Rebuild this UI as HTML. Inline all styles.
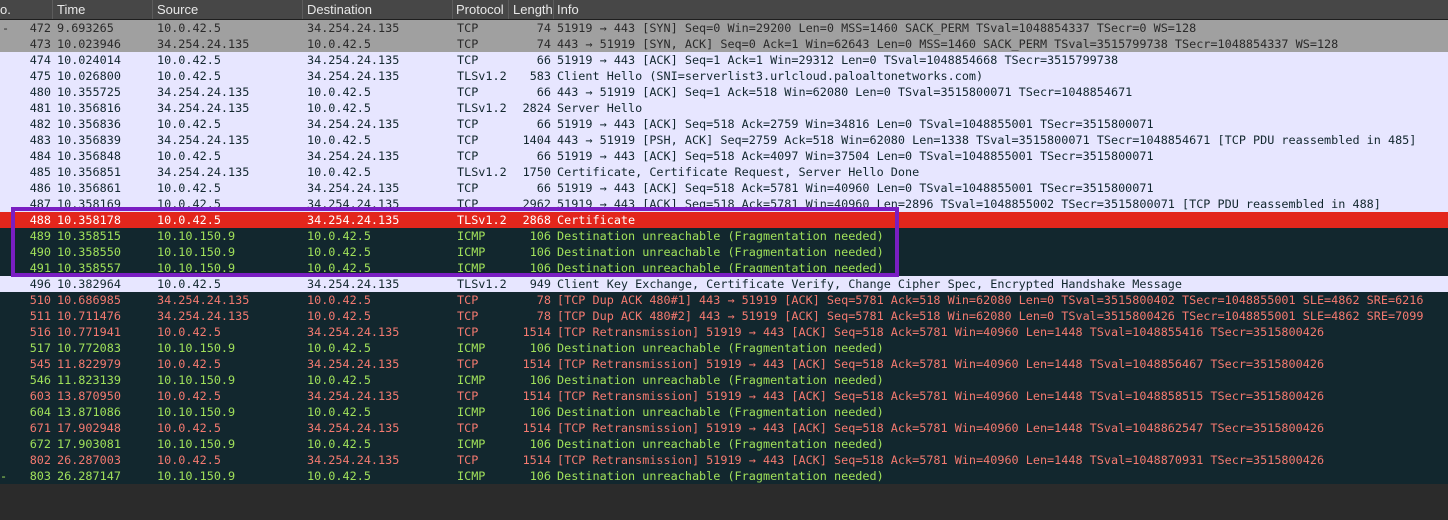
<!DOCTYPE html>
<html><head><meta charset="utf-8"><style>
body{margin:0;width:1448px;height:520px;background:#2b2b2b;overflow:hidden;position:relative}
.hdr{position:absolute;left:0;top:0;width:1448px;height:19px;background:#474747;border-bottom:1px solid #1e1e1e;font:13px "Liberation Sans",sans-serif;color:#e8e8e8}
.hdr span{position:absolute;top:2px}
.hdr i{position:absolute;top:0;width:1px;height:19px;background:#5c5c5c}
.r{position:absolute;left:0;width:1448px;height:16px;font:11.8px "DejaVu Sans Mono","Liberation Mono",monospace;white-space:pre;line-height:16px}
.r span{position:absolute;top:0}
.n{right:1397px;text-align:right}
.t{left:57px}.s{left:157px}.d{left:307px}.p{left:457px}.l{right:897px;text-align:right}.i{left:557px}
.g{background:#a0a0a0;color:#2a2a2a}
.w{background:#e7e6ff;color:#12272e}
.k{background:#12272e;color:#a0e05a}
.x{background:#12272e;color:#f47a70}
.red{background:#e3261c;color:#fff}
.box{position:absolute;left:11px;top:207px;width:880px;height:62px;border:4px solid #7a1ec2}
</style></head><body>
<div class="hdr"><span style="left:0">o.</span><i style="left:52px"></i><span style="left:57px">Time</span><i style="left:152px"></i><span style="left:157px">Source</span><i style="left:302px"></i><span style="left:307px">Destination</span><i style="left:452px"></i><span style="left:456px">Protocol</span><i style="left:508px"></i><span style="left:513px">Length</span><i style="left:553px"></i><span style="left:557px">Info</span></div>

<div class="r g" style="top:20px"><span style="left:2px">-</span><span class="n">472</span><span class="t">9.693265</span><span class="s">10.0.42.5</span><span class="d">34.254.24.135</span><span class="p">TCP</span><span class="l">74</span><span class="i">51919 → 443 [SYN] Seq=0 Win=29200 Len=0 MSS=1460 SACK_PERM TSval=1048854337 TSecr=0 WS=128</span></div>
<div class="r g" style="top:36px"><span class="n">473</span><span class="t">10.023946</span><span class="s">34.254.24.135</span><span class="d">10.0.42.5</span><span class="p">TCP</span><span class="l">74</span><span class="i">443 → 51919 [SYN, ACK] Seq=0 Ack=1 Win=62643 Len=0 MSS=1460 SACK_PERM TSval=3515799738 TSecr=1048854337 WS=128</span></div>
<div class="r w" style="top:52px"><span class="n">474</span><span class="t">10.024014</span><span class="s">10.0.42.5</span><span class="d">34.254.24.135</span><span class="p">TCP</span><span class="l">66</span><span class="i">51919 → 443 [ACK] Seq=1 Ack=1 Win=29312 Len=0 TSval=1048854668 TSecr=3515799738</span></div>
<div class="r w" style="top:68px"><span class="n">475</span><span class="t">10.026800</span><span class="s">10.0.42.5</span><span class="d">34.254.24.135</span><span class="p">TLSv1.2</span><span class="l">583</span><span class="i">Client Hello (SNI=serverlist3.urlcloud.paloaltonetworks.com)</span></div>
<div class="r w" style="top:84px"><span class="n">480</span><span class="t">10.355725</span><span class="s">34.254.24.135</span><span class="d">10.0.42.5</span><span class="p">TCP</span><span class="l">66</span><span class="i">443 → 51919 [ACK] Seq=1 Ack=518 Win=62080 Len=0 TSval=3515800071 TSecr=1048854671</span></div>
<div class="r w" style="top:100px"><span class="n">481</span><span class="t">10.356816</span><span class="s">34.254.24.135</span><span class="d">10.0.42.5</span><span class="p">TLSv1.2</span><span class="l">2824</span><span class="i">Server Hello</span></div>
<div class="r w" style="top:116px"><span class="n">482</span><span class="t">10.356836</span><span class="s">10.0.42.5</span><span class="d">34.254.24.135</span><span class="p">TCP</span><span class="l">66</span><span class="i">51919 → 443 [ACK] Seq=518 Ack=2759 Win=34816 Len=0 TSval=1048855001 TSecr=3515800071</span></div>
<div class="r w" style="top:132px"><span class="n">483</span><span class="t">10.356839</span><span class="s">34.254.24.135</span><span class="d">10.0.42.5</span><span class="p">TCP</span><span class="l">1404</span><span class="i">443 → 51919 [PSH, ACK] Seq=2759 Ack=518 Win=62080 Len=1338 TSval=3515800071 TSecr=1048854671 [TCP PDU reassembled in 485]</span></div>
<div class="r w" style="top:148px"><span class="n">484</span><span class="t">10.356848</span><span class="s">10.0.42.5</span><span class="d">34.254.24.135</span><span class="p">TCP</span><span class="l">66</span><span class="i">51919 → 443 [ACK] Seq=518 Ack=4097 Win=37504 Len=0 TSval=1048855001 TSecr=3515800071</span></div>
<div class="r w" style="top:164px"><span class="n">485</span><span class="t">10.356851</span><span class="s">34.254.24.135</span><span class="d">10.0.42.5</span><span class="p">TLSv1.2</span><span class="l">1750</span><span class="i">Certificate, Certificate Request, Server Hello Done</span></div>
<div class="r w" style="top:180px"><span class="n">486</span><span class="t">10.356861</span><span class="s">10.0.42.5</span><span class="d">34.254.24.135</span><span class="p">TCP</span><span class="l">66</span><span class="i">51919 → 443 [ACK] Seq=518 Ack=5781 Win=40960 Len=0 TSval=1048855001 TSecr=3515800071</span></div>
<div class="r w" style="top:196px"><span class="n">487</span><span class="t">10.358169</span><span class="s">10.0.42.5</span><span class="d">34.254.24.135</span><span class="p">TCP</span><span class="l">2962</span><span class="i">51919 → 443 [ACK] Seq=518 Ack=5781 Win=40960 Len=2896 TSval=1048855002 TSecr=3515800071 [TCP PDU reassembled in 488]</span></div>
<div class="r red" style="top:212px"><span class="n">488</span><span class="t">10.358178</span><span class="s">10.0.42.5</span><span class="d">34.254.24.135</span><span class="p">TLSv1.2</span><span class="l">2868</span><span class="i">Certificate</span></div>
<div class="r k" style="top:228px"><span class="n">489</span><span class="t">10.358515</span><span class="s">10.10.150.9</span><span class="d">10.0.42.5</span><span class="p">ICMP</span><span class="l">106</span><span class="i">Destination unreachable (Fragmentation needed)</span></div>
<div class="r k" style="top:244px"><span class="n">490</span><span class="t">10.358550</span><span class="s">10.10.150.9</span><span class="d">10.0.42.5</span><span class="p">ICMP</span><span class="l">106</span><span class="i">Destination unreachable (Fragmentation needed)</span></div>
<div class="r k" style="top:260px"><span class="n">491</span><span class="t">10.358557</span><span class="s">10.10.150.9</span><span class="d">10.0.42.5</span><span class="p">ICMP</span><span class="l">106</span><span class="i">Destination unreachable (Fragmentation needed)</span></div>
<div class="r w" style="top:276px"><span class="n">496</span><span class="t">10.382964</span><span class="s">10.0.42.5</span><span class="d">34.254.24.135</span><span class="p">TLSv1.2</span><span class="l">949</span><span class="i">Client Key Exchange, Certificate Verify, Change Cipher Spec, Encrypted Handshake Message</span></div>
<div class="r x" style="top:292px"><span class="n">510</span><span class="t">10.686985</span><span class="s">34.254.24.135</span><span class="d">10.0.42.5</span><span class="p">TCP</span><span class="l">78</span><span class="i">[TCP Dup ACK 480#1] 443 → 51919 [ACK] Seq=5781 Ack=518 Win=62080 Len=0 TSval=3515800402 TSecr=1048855001 SLE=4862 SRE=6216</span></div>
<div class="r x" style="top:308px"><span class="n">511</span><span class="t">10.711476</span><span class="s">34.254.24.135</span><span class="d">10.0.42.5</span><span class="p">TCP</span><span class="l">78</span><span class="i">[TCP Dup ACK 480#2] 443 → 51919 [ACK] Seq=5781 Ack=518 Win=62080 Len=0 TSval=3515800426 TSecr=1048855001 SLE=4862 SRE=7099</span></div>
<div class="r x" style="top:324px"><span class="n">516</span><span class="t">10.771941</span><span class="s">10.0.42.5</span><span class="d">34.254.24.135</span><span class="p">TCP</span><span class="l">1514</span><span class="i">[TCP Retransmission] 51919 → 443 [ACK] Seq=518 Ack=5781 Win=40960 Len=1448 TSval=1048855416 TSecr=3515800426</span></div>
<div class="r k" style="top:340px"><span class="n">517</span><span class="t">10.772083</span><span class="s">10.10.150.9</span><span class="d">10.0.42.5</span><span class="p">ICMP</span><span class="l">106</span><span class="i">Destination unreachable (Fragmentation needed)</span></div>
<div class="r x" style="top:356px"><span class="n">545</span><span class="t">11.822979</span><span class="s">10.0.42.5</span><span class="d">34.254.24.135</span><span class="p">TCP</span><span class="l">1514</span><span class="i">[TCP Retransmission] 51919 → 443 [ACK] Seq=518 Ack=5781 Win=40960 Len=1448 TSval=1048856467 TSecr=3515800426</span></div>
<div class="r k" style="top:372px"><span class="n">546</span><span class="t">11.823139</span><span class="s">10.10.150.9</span><span class="d">10.0.42.5</span><span class="p">ICMP</span><span class="l">106</span><span class="i">Destination unreachable (Fragmentation needed)</span></div>
<div class="r x" style="top:388px"><span class="n">603</span><span class="t">13.870950</span><span class="s">10.0.42.5</span><span class="d">34.254.24.135</span><span class="p">TCP</span><span class="l">1514</span><span class="i">[TCP Retransmission] 51919 → 443 [ACK] Seq=518 Ack=5781 Win=40960 Len=1448 TSval=1048858515 TSecr=3515800426</span></div>
<div class="r k" style="top:404px"><span class="n">604</span><span class="t">13.871086</span><span class="s">10.10.150.9</span><span class="d">10.0.42.5</span><span class="p">ICMP</span><span class="l">106</span><span class="i">Destination unreachable (Fragmentation needed)</span></div>
<div class="r x" style="top:420px"><span class="n">671</span><span class="t">17.902948</span><span class="s">10.0.42.5</span><span class="d">34.254.24.135</span><span class="p">TCP</span><span class="l">1514</span><span class="i">[TCP Retransmission] 51919 → 443 [ACK] Seq=518 Ack=5781 Win=40960 Len=1448 TSval=1048862547 TSecr=3515800426</span></div>
<div class="r k" style="top:436px"><span class="n">672</span><span class="t">17.903081</span><span class="s">10.10.150.9</span><span class="d">10.0.42.5</span><span class="p">ICMP</span><span class="l">106</span><span class="i">Destination unreachable (Fragmentation needed)</span></div>
<div class="r x" style="top:452px"><span class="n">802</span><span class="t">26.287003</span><span class="s">10.0.42.5</span><span class="d">34.254.24.135</span><span class="p">TCP</span><span class="l">1514</span><span class="i">[TCP Retransmission] 51919 → 443 [ACK] Seq=518 Ack=5781 Win=40960 Len=1448 TSval=1048870931 TSecr=3515800426</span></div>
<div class="r k" style="top:468px"><span style="left:0">-</span><span class="n">803</span><span class="t">26.287147</span><span class="s">10.10.150.9</span><span class="d">10.0.42.5</span><span class="p">ICMP</span><span class="l">106</span><span class="i">Destination unreachable (Fragmentation needed)</span></div>
<div class="box"></div>
</body></html>
